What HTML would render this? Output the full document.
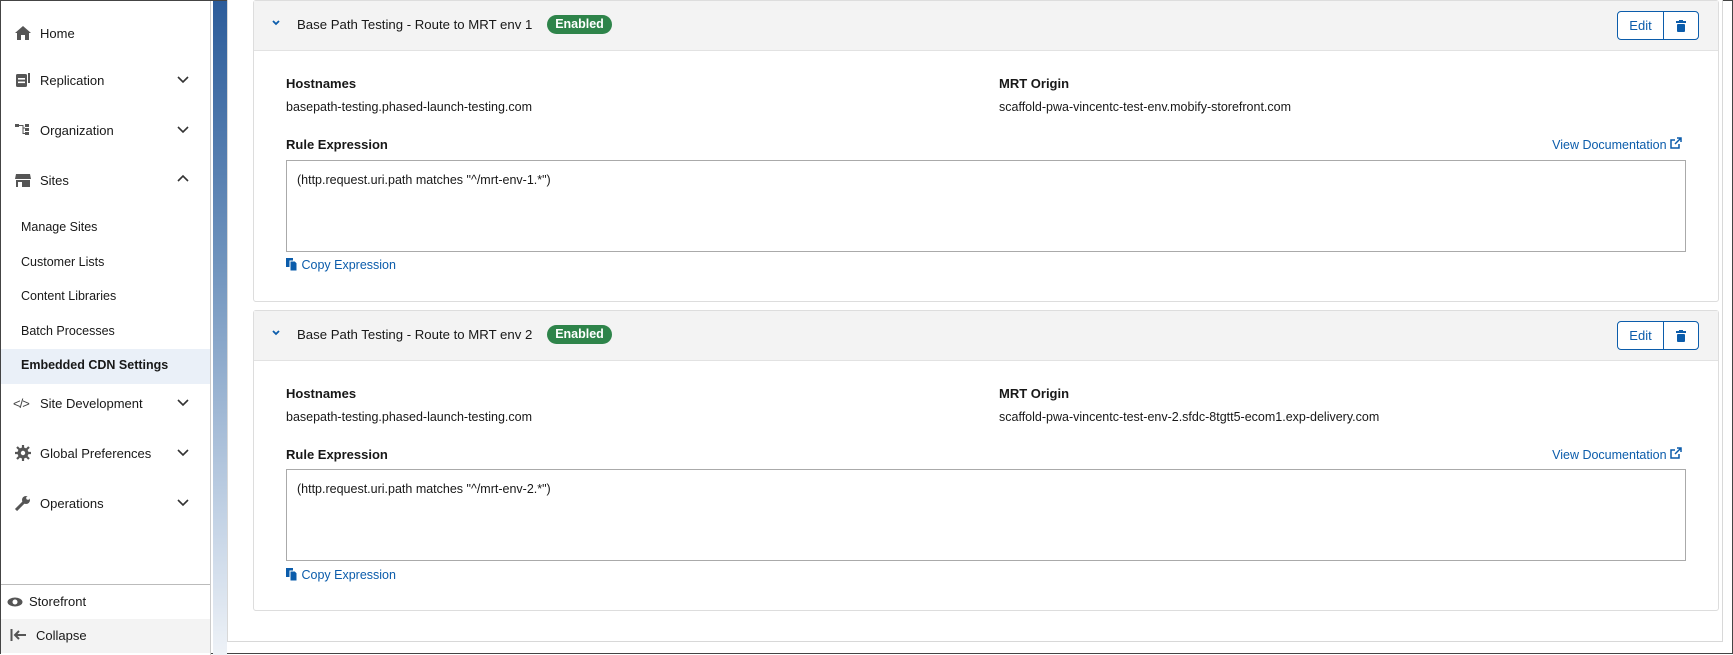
<!DOCTYPE html>
<html><head><meta charset="utf-8"><style>
*{box-sizing:border-box;margin:0;padding:0}
body{width:1733px;height:654px;overflow:hidden;background:#fff;font-family:"Liberation Sans",Arial,sans-serif;color:#181818;position:relative;border:1px solid #444}
.side{position:absolute;left:0;top:0;width:210px;height:654px;border-right:1px solid #ccc;background:#fff}
.it{position:absolute;left:0;width:209px;height:30px;font-size:13px;display:flex;align-items:center}
.it .ic{position:absolute;left:13px;top:7px;width:18px;height:16px}
.it .tx{position:absolute;left:39px}
.it .cv{position:absolute;left:176px;top:8px}
.sub{position:absolute;left:20px;font-size:12.5px}
.strip{position:absolute;left:212px;top:0;width:14px;height:654px;background:linear-gradient(#2c5c9a,#6f93bd 40%,#c5d4e6 80%,#eef2f7)}
.wrap{position:absolute;left:226px;top:-2px;width:1496px;height:643px;border:1px solid #d8d8d8;border-top:none;background:#fff}
.card{position:absolute;left:252px;width:1466px;border:1px solid #ddd;border-radius:3px;background:#fff}
.hd{height:50px;background:#f3f3f3;border-bottom:1px solid #e2e2e2;position:relative}
.hd .chev{position:absolute;left:17px;top:17px}
.hd .tt{position:absolute;left:43px;top:16px;font-size:13.2px}
.badge{position:absolute;left:293px;top:14px;height:19px;width:65px;background:#2e844a;color:#fff;font-weight:bold;font-size:12.5px;border-radius:10px;text-align:center;line-height:19px}
.btns{position:absolute;left:1363px;top:10px;height:29px;display:flex;border:1px solid #0b5cab;border-radius:4px;background:#fff}
.btns div{height:27px;display:flex;align-items:center;justify-content:center;color:#0b5cab;font-size:13px}
.lbl{position:absolute;font-size:13px;font-weight:bold}
.val{position:absolute;font-size:12.5px}
.ta{position:absolute;left:32px;width:1400px;height:92px;border:1px solid #aaa;font-size:12.5px;padding:12px 10px}
.lnk{position:absolute;color:#0b5cab;font-size:12.5px}
</style></head><body>
<div class="side">
 <div class="it" style="top:17px"><svg class="ic" viewBox="0 0 18 16"><path d="M9 1L1 8h2v7h4v-5h4v5h4V8h2z" fill="#555"/></svg><span class="tx">Home</span></div>
 <div class="it" style="top:64px"><svg class="ic" viewBox="0 0 18 16"><rect x="2" y="2" width="11" height="13" rx="1.5" fill="#555"/><rect x="4" y="6" width="7" height="1.6" fill="#fff"/><rect x="4" y="9.5" width="7" height="1.6" fill="#fff"/><rect x="14" y="1" width="2" height="10" fill="#555"/></svg><span class="tx">Replication</span><svg class="cv" width="12" height="12" viewBox="0 0 12 12"><path d="M1 4l5 5 5-5" stroke="#333" stroke-width="1.6" fill="none"/></svg></div>
 <div class="it" style="top:114px"><svg class="ic" viewBox="0 0 18 16"><rect x="1" y="2" width="4" height="3" fill="#555"/><path d="M5 3.5h4v8h2M9 6h2" stroke="#555" fill="none"/><rect x="11" y="2" width="4" height="3" fill="#555"/><rect x="11" y="6" width="4" height="3" fill="#555"/><rect x="11" y="10" width="4" height="3" fill="#555"/></svg><span class="tx">Organization</span><svg class="cv" width="12" height="12" viewBox="0 0 12 12"><path d="M1 4l5 5 5-5" stroke="#333" stroke-width="1.6" fill="none"/></svg></div>
 <div class="it" style="top:164px"><svg class="ic" viewBox="0 0 18 16"><path d="M2 2h14l1 5H1z" fill="#555"/><rect x="2" y="8" width="14" height="7" fill="#555"/><rect x="4" y="10" width="4" height="5" fill="#fff"/></svg><span class="tx">Sites</span><svg class="cv" width="12" height="12" viewBox="0 0 12 12"><path d="M1 8l5-5 5 5" stroke="#333" stroke-width="1.6" fill="none"/></svg></div>
 <div class="sub" style="top:219px">Manage Sites</div>
 <div class="sub" style="top:254px">Customer Lists</div>
 <div class="sub" style="top:288px">Content Libraries</div>
 <div class="sub" style="top:323px">Batch Processes</div>
 <div style="position:absolute;left:0;top:348px;width:209px;height:35px;background:#eaf0f8"></div>
 <div class="sub" style="top:357px;font-weight:bold">Embedded CDN Settings</div>
 <div class="it" style="top:387px"><span style="position:absolute;left:12px;font-size:13px;color:#444;letter-spacing:-1px">&lt;/&gt;</span><span class="tx">Site Development</span><svg class="cv" width="12" height="12" viewBox="0 0 12 12"><path d="M1 4l5 5 5-5" stroke="#333" stroke-width="1.6" fill="none"/></svg></div>
 <div class="it" style="top:437px"><svg class="ic" viewBox="0 0 18 16"><circle cx="9" cy="8" r="5.5" fill="#555"/><path d="M9 0v16M1 8h16M3 2l12 12M15 2L3 14" stroke="#555" stroke-width="2.2"/><circle cx="9" cy="8" r="2.2" fill="#fff"/></svg><span class="tx">Global Preferences</span><svg class="cv" width="12" height="12" viewBox="0 0 12 12"><path d="M1 4l5 5 5-5" stroke="#333" stroke-width="1.6" fill="none"/></svg></div>
 <div class="it" style="top:487px"><svg class="ic" viewBox="0 0 18 16"><path d="M2 15L10 7" stroke="#555" stroke-width="3"/><circle cx="12" cy="5" r="4" fill="#555"/><circle cx="14" cy="3" r="1.8" fill="#fff"/></svg><span class="tx">Operations</span><svg class="cv" width="12" height="12" viewBox="0 0 12 12"><path d="M1 4l5 5 5-5" stroke="#333" stroke-width="1.6" fill="none"/></svg></div>
 <div style="position:absolute;left:0;top:583px;width:209px;border-top:1px solid #bbb"></div>
 <svg style="position:absolute;left:6px;top:596px" width="16" height="10" viewBox="0 0 16 10"><ellipse cx="8" cy="5" rx="7.5" ry="4.5" fill="#555"/><circle cx="8" cy="5" r="2.5" fill="#fff"/></svg>
 <div style="position:absolute;left:28px;top:593px;font-size:13px">Storefront</div>
 <div style="position:absolute;left:0;top:618px;width:209px;height:34px;background:#f3f3f3"></div>
 <svg style="position:absolute;left:9px;top:627px" width="18" height="14" viewBox="0 0 18 14"><path d="M1.5 1v12M16 7H5M9 3L5 7l4 4" stroke="#555" stroke-width="2" fill="none"/></svg>
 <div style="position:absolute;left:35px;top:627px;font-size:13px">Collapse</div>
</div>
<div class="strip"></div>
<div class="wrap"></div>

<div class="card" style="top:-1px;height:302px">
 <div class="hd"><svg class="chev" width="10" height="10" viewBox="0 0 10 10"><path d="M2 3l3 3 3-3" stroke="#0b5cab" stroke-width="1.8" fill="none"/></svg><span class="tt">Base Path Testing - Route to MRT env 1</span><span class="badge">Enabled</span>
  <div class="btns"><div style="width:46px;border-right:1px solid #0b5cab">Edit</div><div style="width:34px"><svg width="10" height="12" viewBox="0 0 10 12"><rect x="0" y="1" width="10" height="2" fill="#0b5cab"/><rect x="3" y="0" width="4" height="2" fill="#0b5cab"/><rect x="1" y="4" width="8" height="8" rx="1" fill="#0b5cab"/></svg></div></div></div>
 <div class="lbl" style="left:32px;top:75px">Hostnames</div>
 <div class="val" style="left:32px;top:99px">basepath-testing.phased-launch-testing.com</div>
 <div class="lbl" style="left:745px;top:75px">MRT Origin</div>
 <div class="val" style="left:745px;top:99px">scaffold-pwa-vincentc-test-env.mobify-storefront.com</div>
 <div class="lbl" style="left:32px;top:136px">Rule Expression</div>
 <div class="lnk" style="right:36px;top:136px">View Documentation <svg width="12" height="12" viewBox="0 0 12 12"><path d="M9 7v4H1V3h4M7 1h4v4M11 1L5 7" stroke="#0b5cab" stroke-width="1.5" fill="none"/></svg></div>
 <div class="ta" style="top:159px">(http.request.uri.path matches "^/mrt-env-1.*")</div>
 <div class="lnk" style="left:32px;top:257px"><svg width="12" height="13" viewBox="0 0 12 13" style="vertical-align:-2px"><rect x="0" y="0" width="7" height="9" fill="#0b5cab"/><path d="M4 3h5l2 2v8H4z" fill="#0b5cab" stroke="#fff" stroke-width="1"/></svg> Copy Expression</div>
</div>

<div class="card" style="top:309px;height:301px">
 <div class="hd"><svg class="chev" width="10" height="10" viewBox="0 0 10 10"><path d="M2 3l3 3 3-3" stroke="#0b5cab" stroke-width="1.8" fill="none"/></svg><span class="tt">Base Path Testing - Route to MRT env 2</span><span class="badge">Enabled</span>
  <div class="btns"><div style="width:46px;border-right:1px solid #0b5cab">Edit</div><div style="width:34px"><svg width="10" height="12" viewBox="0 0 10 12"><rect x="0" y="1" width="10" height="2" fill="#0b5cab"/><rect x="3" y="0" width="4" height="2" fill="#0b5cab"/><rect x="1" y="4" width="8" height="8" rx="1" fill="#0b5cab"/></svg></div></div></div>
 <div class="lbl" style="left:32px;top:75px">Hostnames</div>
 <div class="val" style="left:32px;top:99px">basepath-testing.phased-launch-testing.com</div>
 <div class="lbl" style="left:745px;top:75px">MRT Origin</div>
 <div class="val" style="left:745px;top:99px">scaffold-pwa-vincentc-test-env-2.sfdc-8tgtt5-ecom1.exp-delivery.com</div>
 <div class="lbl" style="left:32px;top:136px">Rule Expression</div>
 <div class="lnk" style="right:36px;top:136px">View Documentation <svg width="12" height="12" viewBox="0 0 12 12"><path d="M9 7v4H1V3h4M7 1h4v4M11 1L5 7" stroke="#0b5cab" stroke-width="1.5" fill="none"/></svg></div>
 <div class="ta" style="top:158px">(http.request.uri.path matches "^/mrt-env-2.*")</div>
 <div class="lnk" style="left:32px;top:257px"><svg width="12" height="13" viewBox="0 0 12 13" style="vertical-align:-2px"><rect x="0" y="0" width="7" height="9" fill="#0b5cab"/><path d="M4 3h5l2 2v8H4z" fill="#0b5cab" stroke="#fff" stroke-width="1"/></svg> Copy Expression</div>
</div>
</body></html>
